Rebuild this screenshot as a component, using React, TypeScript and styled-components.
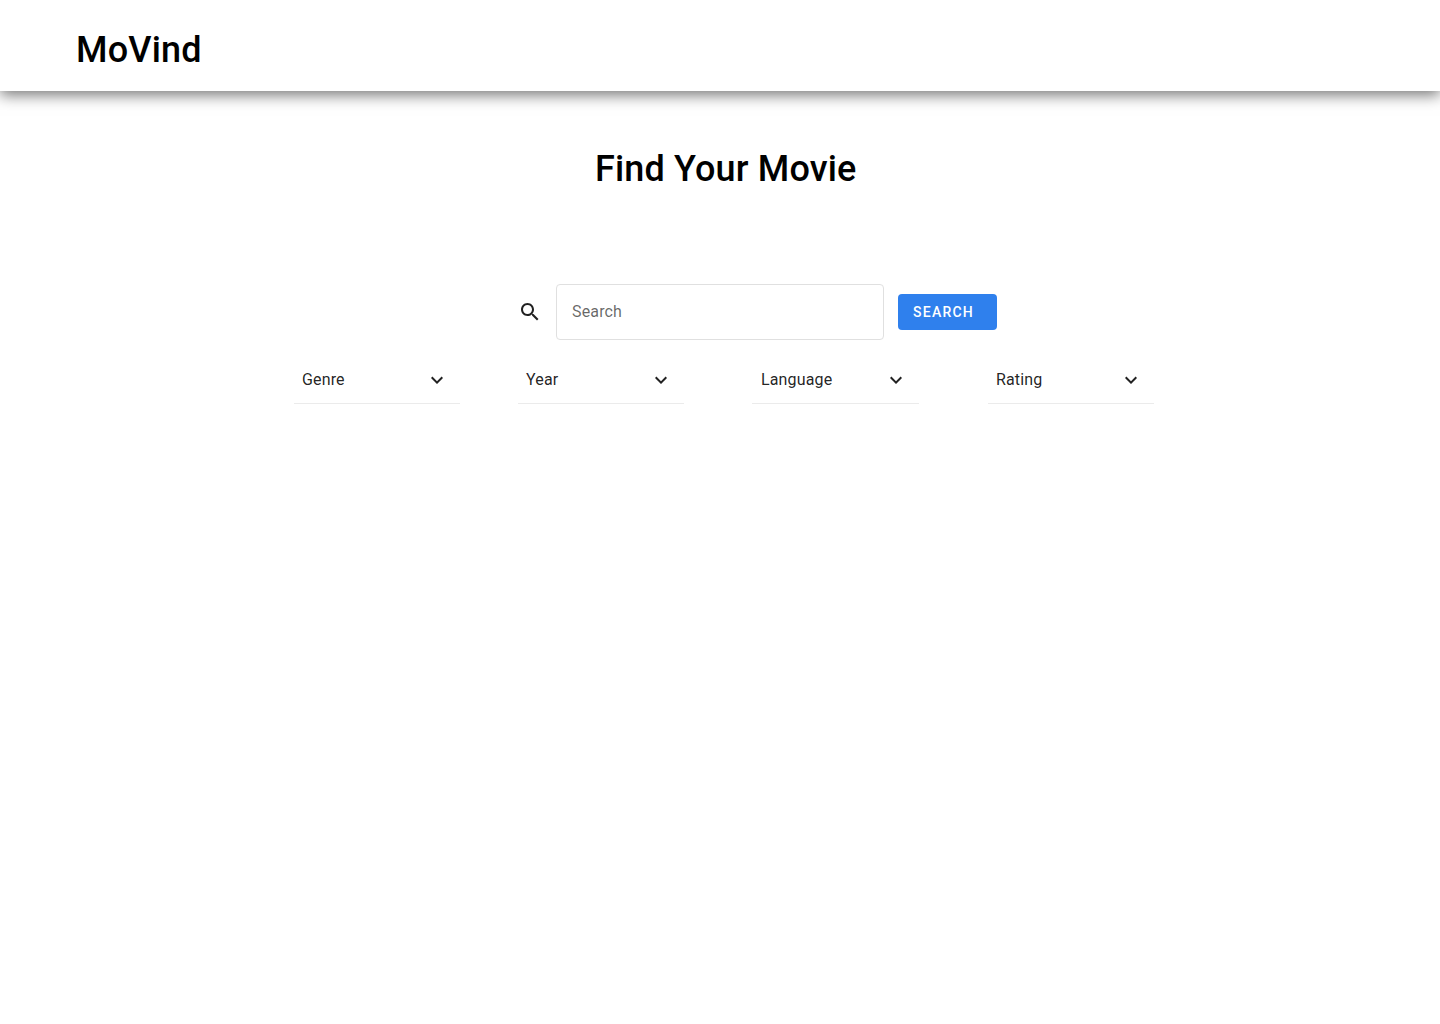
import React from "react";
import styled, { createGlobalStyle } from "styled-components";

const GlobalStyle = createGlobalStyle`
  * { box-sizing: border-box; }
  body { margin: 0; background: #fff; font-family: Roboto, "Liberation Sans", sans-serif; }
`;

const Page = styled.div`
  width: 1440px;
  height: 1024px;
  overflow: hidden;
  background: #fff;
`;

const Header = styled.header`
  display: flex;
  height: 91px;
  padding: 29px 76px 0;
  background: #fff;
  box-shadow: 0 4px 14px rgba(0, 0, 0, 0.54);
`;

const Logo = styled.div`
  font-size: 36px;
  font-weight: 500;
  line-height: 42px;
  letter-spacing: 0.2px;
  color: #000;
`;

const Main = styled.main`
  display: flex;
  flex-direction: column;
`;

const Title = styled.h1`
  margin: 57px 0 0 595px;
  font-size: 36px;
  font-weight: 500;
  line-height: 42px;
  letter-spacing: 0.15px;
  color: #000;
`;

const SearchForm = styled.form`
  display: flex;
  align-items: center;
  margin: 94px 0 0 518px;
`;

const Input = styled.input`
  width: 328px;
  height: 56px;
  margin: 0 14px;
  padding: 0 15px 2px;
  border: 1px solid #e0e0e0;
  border-radius: 4px;
  outline: 0;
  font: 400 16px/24px Roboto, sans-serif;
  letter-spacing: 0.15px;
  &::placeholder { color: rgba(0, 0, 0, 0.6); opacity: 1; }
`;

const Button = styled.button`
  width: 99px;
  height: 36px;
  padding: 0 15px;
  border: 0;
  border-radius: 4px;
  background: #2f80ed;
  color: #fff;
  text-align: left;
  font: 500 14px/16px Roboto, sans-serif;
  letter-spacing: 1.25px;
`;

const Filters = styled.div`
  display: flex;
  margin: 16px 0 0 294px;
`;

const Filter = styled.div<{ $gap: number; $lead?: number }>`
  display: flex;
  justify-content: space-between;
  align-items: center;
  width: ${(p) => 166 + (p.$lead ?? 0)}px;
  height: 48px;
  margin-right: ${(p) => p.$gap}px;
  padding: 0 11px 0 ${(p) => 8 + (p.$lead ?? 0)}px;
  border-bottom: 1px solid #ebebeb;
  color: rgba(0, 0, 0, 0.87);
  font-size: 16px;
  line-height: 24px;
  letter-spacing: 0.15px;
`;

const Icon = styled.svg`
  display: block;
  flex: none;
  width: 24px;
  height: 24px;
  fill: rgba(0, 0, 0, 0.87);
`;

const filters = [
  { label: "Genre", gap: 58 },
  { label: "Year", gap: 68 },
  { label: "Language", gap: 69, lead: 1 },
  { label: "Rating", gap: 0 },
];

export default function App() {
  return (
    <Page>
      <GlobalStyle />
      <Header><Logo>MoVind</Logo></Header>
      <Main>
        <Title>Find Your Movie</Title>
        <SearchForm>
          <Icon viewBox="0 0 24 24">
            <path d="M15.5 14h-.79l-.28-.27C15.41 12.59 16 11.11 16 9.5 16 5.91 13.09 3 9.5 3S3 5.91 3 9.5 5.91 16 9.5 16c1.61 0 3.09-.59 4.23-1.57l.27.28v.79l5 4.99L20.49 19l-4.99-5zm-6 0C7.01 14 5 11.99 5 9.5S7.01 5 9.5 5 14 7.01 14 9.5 11.99 14 9.5 14z" />
          </Icon>
          <Input placeholder="Search" />
          <Button type="button">SEARCH</Button>
        </SearchForm>
        <Filters>
          {filters.map((f) => (
            <Filter key={f.label} $gap={f.gap} $lead={f.lead}>
              {f.label}
              <Icon viewBox="0 0 24 24">
                <path d="M7.41 8.59 12 13.17l4.59-4.58L18 10l-6 6-6-6 1.41-1.41z" />
              </Icon>
            </Filter>
          ))}
        </Filters>
      </Main>
    </Page>
  );
}
